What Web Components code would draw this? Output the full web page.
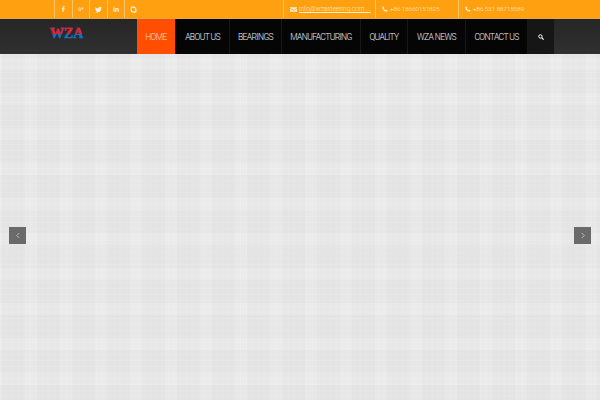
<!DOCTYPE html>
<html>
<head>
<meta charset="utf-8">
<title>WZA Bearing</title>
<style>
  html, body { margin: 0; padding: 0; height: 100%; overflow: hidden; }
  body { display: flex; flex-direction: column; font-family: "Roboto", "Liberation Sans", sans-serif; height: 400px; }
</style>
</head>
<body>
<wz-topbar>
  <wz-social><svg viewBox="0 0 16 16" width="6" height="6"><path fill="currentColor" d="M9.500 16V9h2.300l.4-2.800H9.500V4.500c0-.8.2-1.300 1.400-1.300h1.400V.7C12 .7 11.200.6 10.300.6 8.200.6 6.800 1.900 6.800 4.200v2H4.500V9h2.300v7z"/></svg></wz-social>
  <wz-social><svg viewBox="0 0 16 16" width="7" height="7"><path fill="none" stroke="currentColor" stroke-width="1.500" d="M9 5.500a3.200 3.200 0 1 0 .6 3H6.500M12.500 3v5M10 5.500h5"/></svg></wz-social>
  <wz-social><svg viewBox="0 0 16 16" width="7" height="7"><path fill="currentColor" d="M16 3.500c-.6.3-1.200.4-1.900.5.700-.4 1.200-1 1.400-1.800-.6.400-1.300.6-2.100.8a3.300 3.300 0 0 0-5.600 3C5.100 5.900 2.700 4.600 1.100 2.600c-.9 1.500-.4 3.400 1 4.400-.5 0-1-.2-1.500-.4 0 1.600 1.100 2.900 2.600 3.200-.5.100-1 .2-1.500.1.400 1.300 1.600 2.200 3.100 2.300A6.600 6.600 0 0 1 0 13.500c5.400 3.400 14.500.8 14.400-8.400.6-.4 1.200-1 1.600-1.600z"/></svg></wz-social>
  <wz-social><svg viewBox="0 0 16 16" width="6" height="6"><path fill="currentColor" d="M1 5.500h3V15H1zM2.500 1a1.700 1.700 0 1 1 0 3.400 1.700 1.700 0 0 1 0-3.400zM6 5.500h2.900v1.300c.5-.9 1.500-1.600 3-1.600 3 0 3.600 2 3.600 4.500V15h-3v-4.700c0-1.100 0-2.500-1.500-2.500s-1.800 1.200-1.800 2.400V15H6z"/></svg></wz-social>
  <wz-social><svg viewBox="0 0 16 16" width="7" height="7"><path fill="none" stroke="currentColor" stroke-width="2.600" d="M8 2.500a5.500 5.500 0 0 1 5.500 5.500c0 .6-.1 1.100-.2 1.600.3.500.4 1 .4 1.500a3 3 0 0 1-4.400 2.500A5.500 5.500 0 0 1 2.500 8c0-.5.100-1 .2-1.500A3 3 0 0 1 6.500 2.700c.5-.1 1-.2 1.500-.2z"/></svg></wz-social>
  <wz-contact slot="right" width="92"><svg viewBox="0 0 16 16" width="7" height="7"><path fill="currentColor" d="M0 3h16v1.500L8 9 0 4.500zM0 6.200l8 4.500 8-4.500V13H0z"/></svg><a>info@wzasteering.com ...</a></wz-contact>
  <wz-contact slot="right" width="83"><svg viewBox="0 0 16 16" width="6" height="6"><path fill="currentColor" d="M3.500 .8 6 4.500 4.500 6.300c.8 2 2.700 3.900 4.700 4.700L11 9.500l3.900 2.500c-.6 2-2.300 3.300-4 3C5.500 14 1.500 9.500 1 5c-.2-1.800 1-3.600 2.500-4.200z"/></svg><span>+86 18660151825</span></wz-contact>
  <wz-contact slot="right" width="83" last><svg viewBox="0 0 16 16" width="6" height="6"><path fill="currentColor" d="M3.500 .8 6 4.500 4.500 6.300c.8 2 2.700 3.900 4.700 4.700L11 9.500l3.900 2.500c-.6 2-2.300 3.300-4 3C5.500 14 1.500 9.500 1 5c-.2-1.800 1-3.600 2.500-4.200z"/></svg><span>+86 531 88715589</span></wz-contact>
</wz-topbar>
<wz-nav>
  <wz-logo slot="logo"></wz-logo>
  <wz-link w="38" active>HOME</wz-link>
  <wz-link w="54">ABOUT US</wz-link>
  <wz-link w="52">BEARINGS</wz-link>
  <wz-link w="79">MANUFACTURING</wz-link>
  <wz-link w="47">QUALITY</wz-link>
  <wz-link w="58">WZA NEWS</wz-link>
  <wz-link w="62">CONTACT US</wz-link>
  <wz-link w="27" search><svg viewBox="0 0 16 16" width="6" height="6"><circle cx="6.500" cy="6.500" r="4.500" fill="none" stroke="#fff" stroke-width="2.600"/><path d="M10 10l5 5" stroke="#fff" stroke-width="3"/></svg></wz-link>
</wz-nav>
<wz-slider>
  <wz-arrow><svg viewBox="0 0 8 12" width="4" height="7"><path d="M6.500 1 1.500 6l5 5" fill="none" stroke="#eee" stroke-width="1.200"/></svg></wz-arrow>
  <wz-arrow><svg viewBox="0 0 8 12" width="4" height="7"><path d="M1.500 1l5 5-5 5" fill="none" stroke="#eee" stroke-width="1.200"/></svg></wz-arrow>
</wz-slider>
<script>
  // Small helper, every element is just a shadow root with its own css
  const define = ( name, html, setup ) => {
    customElements.define( name, class extends HTMLElement {
      constructor() {
        super();
        this.attachShadow( {mode: 'open'} ).innerHTML = html;
      }
      connectedCallback() {
        if( setup ) setup( this );
      }
    } );
  };

  define( 'wz-topbar', `
    <style>
      :host {
        background: #ffa010;
        border-bottom: 1px solid #e8a848;
        box-sizing: border-box;
        display: flex;
        flex: none;
        height: 19px;
        justify-content: space-between;
        padding: 0 0 0 54px;
      }
      div { display: flex; }
    </style>
    <div><slot></slot></div>
    <div style="margin-right:59px"><slot name="right"></slot></div>
  ` );

  define( 'wz-social', `
    <style>
      :host {
        align-items: center;
        border-left: 1px solid #ffc46a;
        box-sizing: border-box;
        color: #fff4e0;
        display: flex;
        height: 18px;
        justify-content: center;
        width: 17.600px;
      }
    </style>
    <slot></slot>
  ` );

  define( 'wz-contact', `
    <style>
      :host {
        align-items: center;
        border-left: 1px solid #ffc46a;
        box-sizing: border-box;
        color: #ffeccc;
        display: flex;
        font-size: 6.500px;
        font-weight: 300;
        gap: 2px;
        height: 18px;
        padding-left: 6px;
        white-space: nowrap;
      }
      ::slotted( a ) { text-decoration: underline; }
      ::slotted( span ) { font-size: 6.200px; }
    </style>
    <slot></slot>
  `, el => el.style.width = el.getAttribute( 'width' ) + 'px' );

  define( 'wz-nav', `
    <style>
      :host {
        background: linear-gradient( #262626, #303030 );
        display: flex;
        flex: none;
        height: 35px;
      }
      .logo { box-sizing: border-box; display: flex; padding-left: 50px; width: 137px; }
      .menu { display: flex; }
    </style>
    <div class="logo"><slot name="logo"></slot></div>
    <div class="menu"><slot></slot></div>
  ` );

  define( 'wz-logo', `
    <style>
      :host { display: block; height: 35px; position: relative; width: 34px; }
      span {
        -webkit-text-stroke: .4px currentColor;
        color: #1a70c0;
        font: 700 14px/1 "Liberation Serif", serif;
        left: 0;
        position: absolute;
        top: 8px;
      }
      span + span {
        clip-path: inset( 0 0 50% 0 );
        color: #e0202a;
      }
    </style>
    <span>WZA</span><span aria-hidden="true">WZA</span>
  ` );

  define( 'wz-link', `
    <style>
      :host {
        align-items: center;
        background: #050505;
        border-left: 1px solid #181818;
        box-sizing: border-box;
        color: #eeeeee;
        display: flex;
        font-size: 8.500px;
        font-weight: 300;
        height: 35px;
        justify-content: center;
        letter-spacing: -.6px;
        white-space: nowrap;
      }
      :host( [active] ) { background: #ff4e00; border-left: 0; color: #ffd9c8; }
      :host( [search] ) { background: #161616; }
    </style>
    <slot></slot>
  `, el => el.style.width = el.getAttribute( 'w' ) + 'px' );

  define( 'wz-slider', `
    <style>
      :host {
        align-items: center;
        background-color: #ebebeb;
        background-image:
          repeating-linear-gradient( 90deg, transparent 0 2px, rgba(0,0,0,.017) 2px 25px, transparent 25px 35px ),
          repeating-linear-gradient( 180deg, rgba(0,0,0,.017) 0 4px, transparent 4px 16px, rgba(0,0,0,.017) 16px 35px ),
          repeating-linear-gradient( 90deg, rgba(255,255,255,.12) 0 1px, transparent 1px 6px ),
          repeating-linear-gradient( 180deg, rgba(255,255,255,.12) 0 1px, transparent 1px 6px );
        display: flex;
        flex: 1;
        justify-content: space-between;
        padding: 0 9px;
      }
    </style>
    <slot></slot>
  ` );

  define( 'wz-arrow', `
    <style>
      :host {
        align-items: center;
        background: #6a6a6a;
        display: flex;
        height: 17px;
        justify-content: center;
        margin-top: 17px;
        width: 17px;
      }
    </style>
    <slot></slot>
  ` );
</script>
</body>
</html>
